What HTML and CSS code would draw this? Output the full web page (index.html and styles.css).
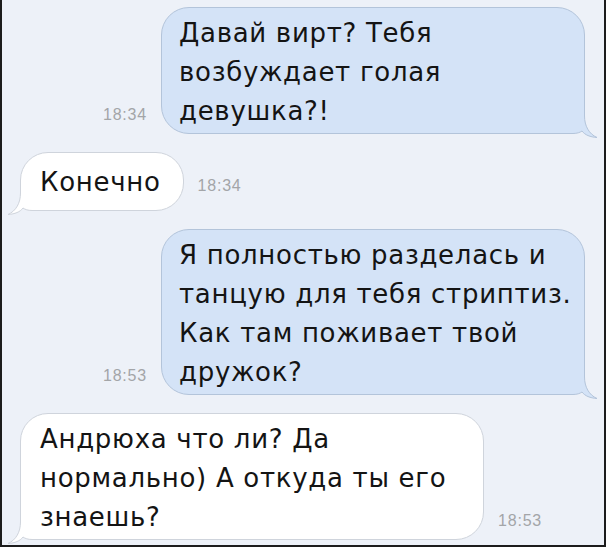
FILE: index.html
```html
<!DOCTYPE html>
<html lang="ru">
<head>
    <meta charset="UTF-8">
    <meta name="viewport" content="width=device-width, initial-scale=1.0">
    <title>Сообщения</title>
    <link rel="stylesheet" href="styles.css">
</head>
<body>
    <div class="chat">
        <div class="row out">
            <span class="time">18:34</span>
            <div class="bubble blue w-out">
                <svg class="tail tail-right" viewBox="0 0 50 40">
                    <path class="tail-fill" d="M2 29.5 L18 29.5 C22 29.5 25 28.5 27 27 C30 31 35 33 42 33.5 C34 30 29.5 22 29.5 12 L29.5 0 L2 0 Z"/>
                    <path class="tail-line" d="M2 29.5 L18 29.5 C22 29.5 25 28.5 27 27 C30 31 35 33 42 33.5 C34 30 29.5 22 29.5 12 L29.5 0"/>
                </svg>
                <span class="text">Давай вирт? Тебя<br>возбуждает голая<br>девушка?!</span>
            </div>
        </div>

        <div class="row in">
            <div class="bubble white single">
                <svg class="tail tail-left" viewBox="0 0 50 40">
                    <path class="tail-fill" d="M2 29.5 L18 29.5 C22 29.5 25 28.5 27 27 C30 31 35 33 42 33.5 C34 30 29.5 22 29.5 12 L29.5 0 L2 0 Z"/>
                    <path class="tail-line" d="M2 29.5 L18 29.5 C22 29.5 25 28.5 27 27 C30 31 35 33 42 33.5 C34 30 29.5 22 29.5 12 L29.5 0"/>
                </svg>
                <span class="text">Конечно</span>
            </div>
            <span class="time mid">18:34</span>
        </div>

        <div class="row out">
            <span class="time">18:53</span>
            <div class="bubble blue w-out">
                <svg class="tail tail-right" viewBox="0 0 50 40">
                    <path class="tail-fill" d="M2 29.5 L18 29.5 C22 29.5 25 28.5 27 27 C30 31 35 33 42 33.5 C34 30 29.5 22 29.5 12 L29.5 0 L2 0 Z"/>
                    <path class="tail-line" d="M2 29.5 L18 29.5 C22 29.5 25 28.5 27 27 C30 31 35 33 42 33.5 C34 30 29.5 22 29.5 12 L29.5 0"/>
                </svg>
                <span class="text">Я полностью разделась и<br>танцую для тебя стриптиз.<br>Как там поживает твой<br>дружок?</span>
            </div>
        </div>

        <div class="row in">
            <div class="bubble white w-in">
                <svg class="tail tail-left" viewBox="0 0 50 40">
                    <path class="tail-fill" d="M2 29.5 L18 29.5 C22 29.5 25 28.5 27 27 C30 31 35 33 42 33.5 C34 30 29.5 22 29.5 12 L29.5 0 L2 0 Z"/>
                    <path class="tail-line" d="M2 29.5 L18 29.5 C22 29.5 25 28.5 27 27 C30 31 35 33 42 33.5 C34 30 29.5 22 29.5 12 L29.5 0"/>
                </svg>
                <span class="text">Андрюха что ли? Да<br>нормально) А откуда ты его<br>знаешь?</span>
            </div>
            <span class="time">18:53</span>
        </div>
    </div>
</body>
</html>
```
FILE: styles.css
```css
body { margin: 0; font-family: "DejaVu Sans", "Liberation Sans", sans-serif; background: #edf1f8; }
.chat { width: 606px; height: 547px; box-sizing: border-box; border: 2px solid #1c1c1c; border-top: 0; padding: 7px 19px 0 18px; display: flex; flex-direction: column; gap: 18px; background: #edf1f8; overflow: hidden; }
.row { display: flex; align-items: flex-end; gap: 14px; }
.row.out { justify-content: flex-end; }
.bubble { position: relative; box-sizing: border-box; font-size: 26px; line-height: 39px; letter-spacing: 0.7px; white-space: nowrap; color: #141414; padding: 6px 18px 2px 17px; border-radius: 28px; }
.bubble .text { position: relative; }
.bubble.blue { background: #d4e3f7; border: 1px solid #b3c4da; }
.bubble.white { background: #fff; border: 1px solid #cfd4dc; }
.w-out { width: 424px; }
.w-in { width: 464px; padding-left: 19px; }
.single { padding: 10px 22px 8px 19px; }
.time { font-family: "Liberation Sans", Arial, sans-serif; font-size: 16px; color: #a3a5a8; letter-spacing: 0.8px; padding-bottom: 10px; }
.time.mid { padding-bottom: 16px; }
.tail { position: absolute; width: 50px; height: 40px; right: -21px; bottom: -11px; }
.tail-left { right: auto; left: -21px; transform: scaleX(-1); }
.blue .tail-fill { fill: #d4e3f7; }
.white .tail-fill { fill: #fff; }
.tail-line { fill: none; stroke-width: 1; }
.blue .tail-line { stroke: #b3c4da; }
.white .tail-line { stroke: #cfd4dc; }
```
